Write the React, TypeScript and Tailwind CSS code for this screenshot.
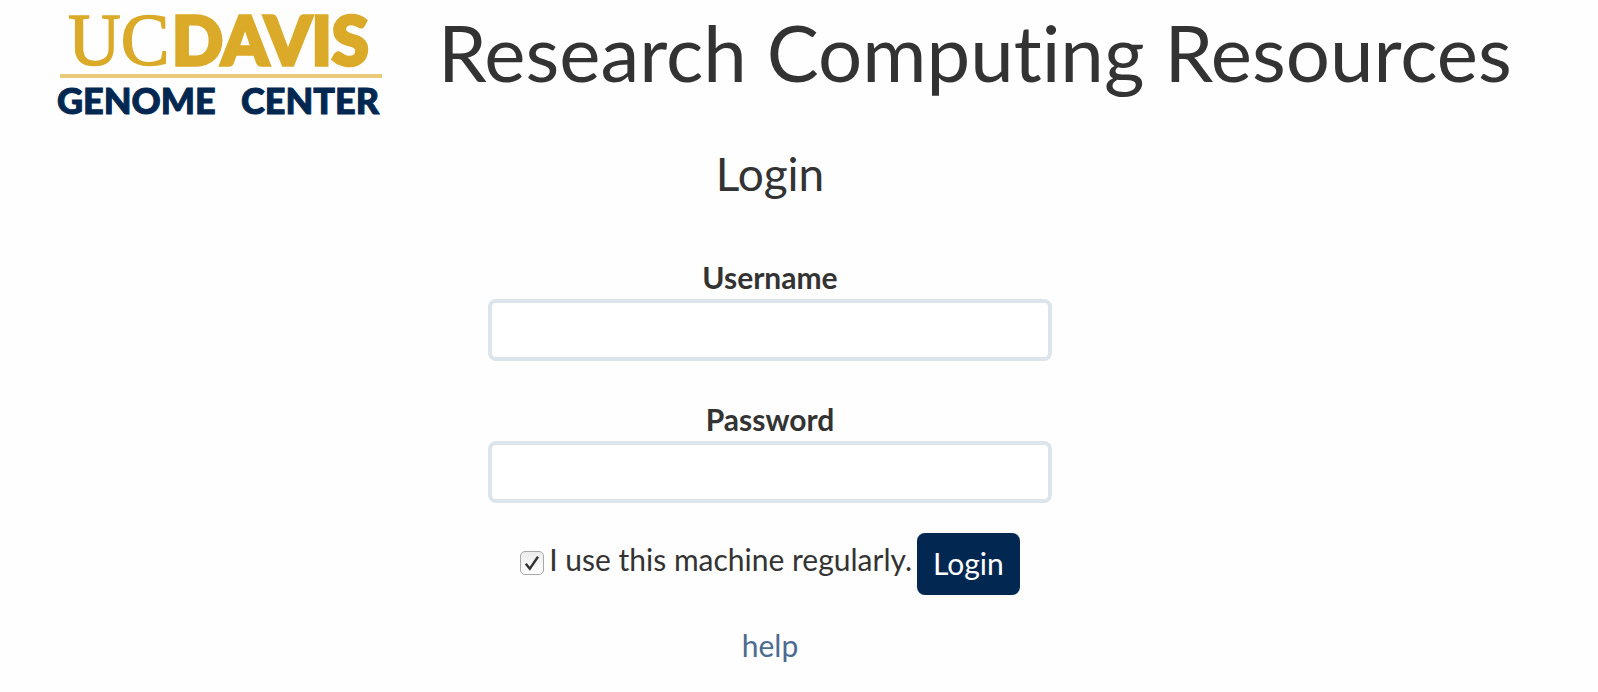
import React from "react";

function Logo() {
  return (
    <svg
      viewBox="0 0 334 126"
      role="img"
      aria-label="UC Davis Genome Center"
      className="h-[126px] w-[334px] shrink-0"
    >
      <g fill="#daaa28" stroke="#daaa28">
        <text x="12" y="65" fontSize="73" strokeWidth="1.4" fontFamily="'Liberation Serif', serif">
          UC
        </text>
        <text x="116" y="65" fontSize="67" fontWeight="900" strokeWidth="3.5" fontFamily="Lato, sans-serif">
          DAVIS
        </text>
      </g>
      <rect x="4" y="74" width="322" height="4" fill="#e8cb78" />
      <g
        fill="#022851"
        stroke="#022851"
        fontSize="36"
        fontWeight="900"
        fontFamily="Lato, sans-serif"
      >
        <text x="1" y="114">GENOME</text>
        <text x="185" y="114">CENTER</text>
      </g>
    </svg>
  );
}

function Field({ id, label, type }: { id: string; label: string; type: string }) {
  return (
    <div className="flex flex-col items-center">
      <label htmlFor={id} className="mb-[2px] font-bold leading-[40px]">
        {label}
      </label>
      <input
        id={id}
        name={id}
        type={type}
        className="h-[62px] w-full rounded-lg border-4 border-[#dce4ec] bg-white px-4 outline-none"
      />
    </div>
  );
}

export default function App() {
  return (
    <div className="min-h-screen bg-[#fefefe] pb-6 font-[Lato,sans-serif] text-[30px] text-[#333333] [font-variant-ligatures:none]">
      <header className="flex items-start pl-14">
        <Logo />
        <h1 className="ml-12 mt-2 whitespace-nowrap text-[78px] leading-[88px]">
          Research Computing Resources
        </h1>
      </header>
      <main className="mr-[58px] flex flex-col items-center">
        <h2 className="mt-5 text-[46px] leading-[56px]">Login</h2>
        <form
          className="mt-[55px] flex w-full max-w-[564px] flex-col"
          onSubmit={(event) => event.preventDefault()}
        >
          <div className="flex flex-col gap-[38px]">
            <Field id="username" label="Username" type="text" />
            <Field id="password" label="Password" type="password" />
          </div>
          <div className="mt-[30px] flex items-center justify-center">
            <label className="flex items-center gap-[5px] whitespace-nowrap pb-[10px] leading-[42px]">
              <span className="grid pt-2">
                <input
                  type="checkbox"
                  name="regular"
                  defaultChecked
                  className="peer col-start-1 row-start-1 size-6 appearance-none rounded-[5px] border border-[#a8a8a8] bg-linear-to-b from-[#ececec] to-white"
                />
                <svg
                  viewBox="0 0 24 24"
                  aria-hidden="true"
                  className="pointer-events-none invisible col-start-1 row-start-1 size-6 fill-none stroke-[#333333] stroke-[2.4] peer-checked:visible"
                >
                  <path d="M5.8 12.8 9.8 17.8 18 5.8" />
                </svg>
              </span>
              I use this machine regularly.
            </label>
            <button
              type="submit"
              className="ml-[5px] h-[62px] rounded-lg bg-[#022851] px-4 pb-[2px] text-white"
            >
              Login
            </button>
          </div>
        </form>
        <a href="#help" className="mt-[29px] leading-[42px] text-[#4d6a8f]">
          help
        </a>
      </main>
    </div>
  );
}
